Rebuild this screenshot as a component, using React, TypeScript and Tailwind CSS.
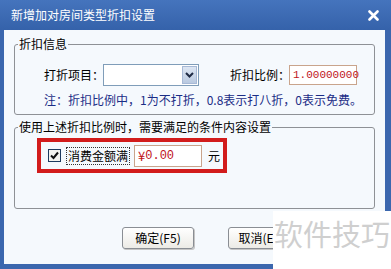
export default function App() {
  const font = { fontFamily: '"Noto Sans CJK SC", "Liberation Sans", sans-serif' };
  const mono = { fontFamily: '"Liberation Mono", monospace' };
  return (
    <div className="relative w-[391px] h-[269px] overflow-hidden bg-[#3b67ae] text-[12px] text-black" style={font}>
      {/* title bar */}
      <div className="flex h-[30px] items-center justify-between pl-[11px] pr-[12px] bg-gradient-to-b from-[#4574bd] to-[#3562aa]">
        <span className="text-[12px] text-white">新增加对房间类型折扣设置</span>
        <svg width="11" height="11" viewBox="0 0 11 11">
          <path d="M1.5 1.5 L9.5 9.5 M9.5 1.5 L1.5 9.5" stroke="#fff" strokeWidth="2.6" strokeLinecap="round" />
        </svg>
      </div>

      {/* body */}
      <div className="ml-[4px] mr-[6px] h-[234px] bg-[#f5f9fd] pt-[6px] px-[10px]">
        <fieldset className="h-[79px] border border-[#8e9196] rounded-[3px] p-0 m-0">
          <legend className="ml-[3px] px-[1px] text-[12px] leading-[16px]">折扣信息</legend>
          <div className="mt-[12px] flex items-center h-[22px] ml-[29px] whitespace-nowrap">
            <span className="w-[59px] shrink-0">打折项目：</span>
            <div className="flex h-[22px] w-[96px] shrink-0 border border-[#7f9db9] bg-white">
              <div className="flex-1" />
              <div className="my-[1px] mr-[1px] flex w-[15px] items-center justify-center bg-gradient-to-b from-[#dde6f3] to-[#b9c9e0] border border-[#a7b9d6]">
                <svg width="9" height="6" viewBox="0 0 9 6">
                  <path d="M1 1 L4.5 4.5 L8 1" stroke="#1e2a44" strokeWidth="2" fill="none" />
                </svg>
              </div>
            </div>
            <span className="ml-[31px] w-[59px] shrink-0">折扣比例：</span>
            <div className="flex h-[20px] w-[68px] shrink-0 items-center border border-[#c9a48c] bg-white pl-[3px] text-[11px] text-[#c0141c]" style={mono}>
              1.00000000
            </div>
          </div>
          <div className="mt-[6px] ml-[29px] h-[16px] leading-[16px] text-[12px] text-[#1b2d86] whitespace-nowrap">
            注：折扣比例中，1为不打折，0.8表示打八折，0表示免费。
          </div>
        </fieldset>

        <fieldset className="mt-[4px] h-[90px] border border-[#8e9196] rounded-[3px] p-0 m-0">
          <legend className="ml-[3px] px-[1px] text-[12px] leading-[16px]">使用上述折扣比例时，需要满足的条件内容设置</legend>
          <div className="mt-[3px] ml-[22px] flex h-[35px] w-[190px] items-center border-4 border-[#d21c1c] pl-[7px] whitespace-nowrap">
            <div className="flex h-[13px] w-[13px] shrink-0 items-center justify-center border border-[#1c3a5e] bg-[#f4f4f0]">
              <svg width="9" height="9" viewBox="0 0 9 9">
                <path d="M1 4.5 L3.5 7 L8 1.5" stroke="#111" strokeWidth="2" fill="none" />
              </svg>
            </div>
            <span className="ml-[5px] border border-dotted border-[#333] px-[1px] leading-[16px]">消费金额满</span>
            <div className="ml-[4px] flex h-[22px] w-[68px] shrink-0 items-center border border-[#c9a48c] bg-white pl-[3px] text-[13px] text-[#c0141c]">
              ¥<span style={mono} className="text-[12px]">0.00</span>
            </div>
            <span className="ml-[6px]">元</span>
          </div>
        </fieldset>

        <div className="mt-[18px] flex gap-[34px] pl-[108px]">
          <button className="h-[22px] w-[72px] rounded-[3px] border border-[#8a8e94] bg-gradient-to-b from-white to-[#ecebe6] text-[12px] shadow-[1px_1px_0_#c5c5c5]">
            确定(F5)
          </button>
          <button className="h-[22px] w-[72px] rounded-[3px] border border-[#8a8e94] bg-gradient-to-b from-white to-[#ecebe6] text-[12px] shadow-[1px_1px_0_#c5c5c5]">
            取消(Esc)
          </button>
        </div>
      </div>

      {/* watermark */}
      <div className="absolute left-[273px] top-[211px] flex h-[58px] w-[118px] items-start justify-center bg-white pt-[4px]">
        <span className="text-[29px] leading-[36px] text-[#cfcfcf]">软件技巧</span>
      </div>
    </div>
  );
}
